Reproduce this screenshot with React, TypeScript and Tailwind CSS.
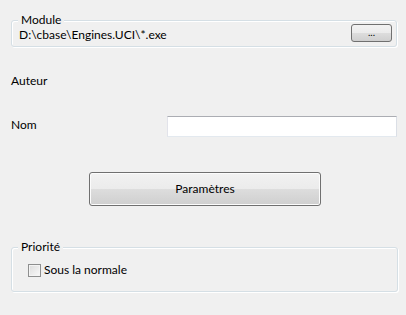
import React from "react";

function GroupBox({ title, className, children }: { title: string; className: string; children: React.ReactNode }) {
  return (
    <div className={`relative rounded-[3px] border border-[#d5dfe5] shadow-[inset_1px_1px_0_#ffffff,1px_1px_0_#ffffff] ${className}`}>
      <span className="absolute -top-[8px] left-[6px] bg-[#f0f0f0] px-[3px] leading-[13px] text-black">{title}</span>
      {children}
    </div>
  );
}

export default function App() {
  return (
    <div
      className="w-[406px] h-[315px] bg-[#f0f0f0] text-[12px] text-black overflow-hidden"
      style={{ fontFamily: '"Segoe UI", Lato, "Noto Sans", sans-serif' }}
    >
      {/* Module */}
      <GroupBox title="Module" className="ml-[11px] mr-[9px] mt-[20px] h-[27px]">
        <div className="flex items-center justify-between pl-[7px] pr-[4px] pt-[3px]">
          <span className="leading-[14px] mt-[4px]">D:\cbase\Engines.UCI\*.exe</span>
          <button className="w-[41px] h-[18px] rounded-[3px] border border-[#707070] bg-[linear-gradient(#f2f2f2_0%,#ebebeb_50%,#dddddd_50%,#cfcfcf_100%)] text-[10px] leading-[10px] pb-[2px]">
            ...
          </button>
        </div>
      </GroupBox>

      {/* Auteur */}
      <div className="ml-[11px] mt-[26px] leading-[16px]">Auteur</div>

      {/* Nom */}
      <div className="flex items-center justify-between ml-[11px] mr-[9px] mt-[27px]">
        <span className="leading-[16px] -mt-[4px]">Nom</span>
        <input className="w-[230px] h-[21px] bg-white border border-[#abadb3] border-l-[#e2e3ea] border-r-[#dbdfe6] border-b-[#e3e9ef] outline-none" />
      </div>

      {/* Paramètres */}
      <div className="ml-[89px] mt-[35px]">
        <button className="w-[232px] h-[34px] rounded-[3px] border border-[#707070] bg-[linear-gradient(#f2f2f2_0%,#ebebeb_50%,#dddddd_50%,#cfcfcf_100%)] shadow-[inset_0_0_0_1px_#fcfcfc] leading-[16px]">
          Paramètres
        </button>
      </div>

      {/* Priorité */}
      <GroupBox title="Priorité" className="ml-[11px] mr-[8px] mt-[41px] h-[45px]">
        <label className="flex items-center gap-[3px] pl-[16px] pt-[14px]">
          <span className="w-[13px] h-[13px] border border-[#8e8f8f] bg-[linear-gradient(135deg,#dcdcdc,#f9f9f9)] shadow-[inset_0_0_0_1px_#f4f4f4]" />
          <span className="leading-[16px]">Sous la normale</span>
        </label>
      </GroupBox>
    </div>
  );
}
